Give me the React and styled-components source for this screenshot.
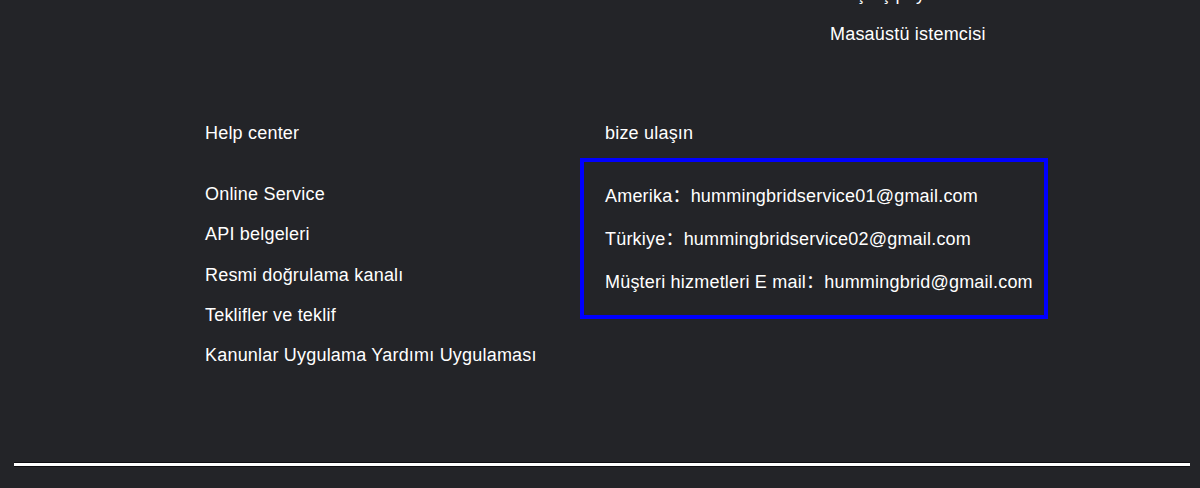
import React from "react";
import styled, { createGlobalStyle } from "styled-components";

const GlobalStyle = createGlobalStyle`
  html, body {
    margin: 0;
    padding: 0;
    background: #232428;
    overflow: hidden;
  }
  body {
    font-family: "Liberation Sans", Arial, "Noto Sans CJK SC", sans-serif;
    color: #ffffff;
  }
`;

const Page = styled.div`
  width: 1200px;
  height: 488px;
  overflow: hidden;
  background: #232428;
`;

const Footer = styled.footer`
  padding-left: 205px;
`;

const TopSection = styled.section`
  display: grid;
  grid-template-columns: 400px 225px 1fr;
  margin-top: -17px;
`;

const BottomSection = styled.section`
  display: grid;
  grid-template-columns: 400px 1fr;
  margin-top: 77px;
`;

const Column = styled.div`
  display: flex;
  flex-direction: column;
`;

const List = styled.ul`
  list-style: none;
  margin: ${(p) => p.$offset || 0}px 0 0;
  padding: 0;
  display: flex;
  flex-direction: column;
  gap: ${(p) => p.$gap}px;
`;

const Item = styled.li`
  font-size: 18px;
  line-height: 22px;
  letter-spacing: 0.2px;
  white-space: nowrap;
  color: #ffffff;
`;

const Heading = styled.h4`
  margin: 0;
  font-size: 18px;
  line-height: 22px;
  letter-spacing: 0.2px;
  font-weight: 400;
  color: #ffffff;
`;

const ContactBox = styled.div`
  box-sizing: border-box;
  width: 468px;
  margin: 14px 0 0 -25px;
  border: 4px solid #0000ff;
  padding: 22.7px 8px 22.3px 21px;
`;

const Divider = styled.div`
  margin: 96px 10px 0 14px;
  height: 3px;
  background: #ffffff;
  border-top: 1px solid #0c0c10;
  border-bottom: 1px solid #0c0c10;
`;

const helpLinks = [
  "Online Service",
  "API belgeleri",
  "Resmi doğrulama kanalı",
  "Teklifler ve teklif",
  "Kanunlar Uygulama Yardımı Uygulaması",
];

const contacts = [
  ["Amerika", "hummingbridservice01@gmail.com"],
  ["Türkiye", "hummingbridservice02@gmail.com"],
  ["Müşteri hizmetleri E mail", "hummingbrid@gmail.com"],
];

export default function App() {
  return (
    <Page>
      <GlobalStyle />
      <Footer>
        <TopSection>
          <Column />
          <Column />
          <Column>
            <List $gap={18}>
              <Item>Akış üç pay</Item>
              <Item>Masaüstü istemcisi</Item>
            </List>
          </Column>
        </TopSection>
        <BottomSection>
          <Column>
            <Heading>Help center</Heading>
            <List $gap={18.25} $offset={39}>
              {helpLinks.map((t) => (
                <Item key={t}>{t}</Item>
              ))}
            </List>
          </Column>
          <Column>
            <Heading>bize ulaşın</Heading>
            <ContactBox>
              <List $gap={21}>
                {contacts.map(([k, v]) => (
                  <Item key={k}>
                    {k}：{v}
                  </Item>
                ))}
              </List>
            </ContactBox>
          </Column>
        </BottomSection>
      </Footer>
      <Divider />
    </Page>
  );
}
